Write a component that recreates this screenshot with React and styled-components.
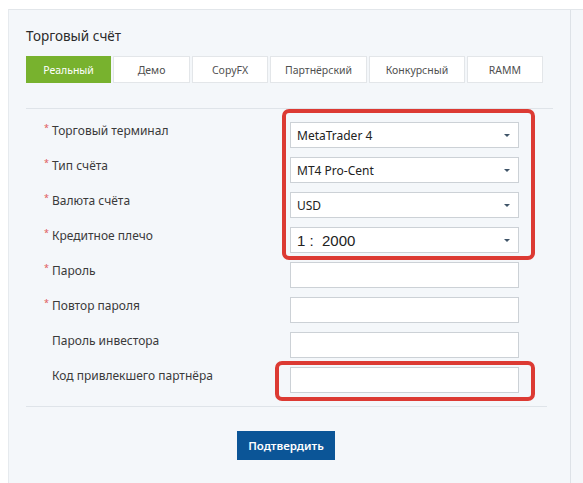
import React from 'react'
import styled, { createGlobalStyle } from 'styled-components'

const GlobalStyle = createGlobalStyle`
  body {
    margin: 0;
    background: #ffffff;
    font-family: "Noto Sans", "Open Sans", sans-serif;
  }
`

const tabs = [
  { label: 'Реальный', width: 85, active: true },
  { label: 'Демо', width: 77 },
  { label: 'CopyFX', width: 76 },
  { label: 'Партнёрский', width: 97 },
  { label: 'Конкурсный', width: 96 },
  { label: 'RAMM', width: 76 },
]

const fields = [
  { label: 'Торговый терминал', required: true, select: 'MetaTrader 4' },
  { label: 'Тип счёта', required: true, select: 'MT4 Pro-Cent' },
  { label: 'Валюта счёта', required: true, select: 'USD' },
  { label: 'Кредитное плечо', required: true, select: '1 :  2000', big: true },
  { label: 'Пароль', required: true },
  { label: 'Повтор пароля', required: true },
  { label: 'Пароль инвестора' },
  { label: 'Код привлекшего партнёра' },
]

const App = () => {
  return (
    <Page>
      <GlobalStyle />
      <Frame>
        <Main>
          <Titulo>Торговый счёт</Titulo>
          <Tabs>
            {tabs.map(t => (
              <Tab key={t.label} $w={t.width} $active={t.active}>{t.label}</Tab>
            ))}
          </Tabs>
          <Divider />
          <Form>
            {fields.map(f => (
              <Row key={f.label}>
                <Label>
                  <Star>{f.required ? '*' : ''}</Star>
                  {f.label}
                </Label>
                {f.select ? (
                  <Select>
                    <SelectValue $big={f.big}>{f.select}</SelectValue>
                    <Arrow />
                  </Select>
                ) : (
                  <Input />
                )}
              </Row>
            ))}
            <Highlight $x={256} $y={-13} $w={253} $h={151} />
            <Highlight $x={249} $y={239} $w={260} $h={40} />
          </Form>
          <Divider $w={521} />
          <Actions>
            <Boton>Подтвердить</Boton>
          </Actions>
        </Main>
      </Frame>
    </Page>
  )
}

const Page = styled.div`
  padding: 9px 0 0 8px;
`

const Frame = styled.div`
  display: flex;
  min-height: 474px;
  background: #f4f7fa;
  border-top: 1px solid #e2e6ea;
  border-left: 1px solid #e6eaee;
`

const Main = styled.div`
  width: 544px;
  padding: 16px 0 0 17px;
  border-right: 1px solid #dde2e7;
`

const Titulo = styled.h2`
  margin: 0;
  font-size: 13.5px;
  line-height: 20px;
  font-weight: 400;
  color: #2b2b2b;
`

const Tabs = styled.div`
  display: flex;
  gap: 2px;
  margin-top: 10px;
`

const Tab = styled.div`
  width: ${p => p.$w}px;
  height: 27px;
  box-sizing: border-box;
  display: flex;
  align-items: center;
  justify-content: center;
  font-size: 10.5px;
  color: ${p => (p.$active ? '#ffffff' : '#505050')};
  background: ${p => (p.$active ? '#78b22e' : '#ffffff')};
  border: 1px solid ${p => (p.$active ? '#78b22e' : '#e3e6e9')};
`

const Divider = styled.div`
  width: ${p => p.$w || 527}px;
  height: 1px;
  background: #dfe4e9;
  margin-top: ${p => (p.$w ? 13 : 25)}px;
`

const Form = styled.div`
  position: relative;
  display: flex;
  flex-direction: column;
  gap: 9px;
  margin-top: 13px;
`

const Row = styled.div`
  display: flex;
  align-items: flex-start;
`

const Label = styled.div`
  width: 246px;
  padding-left: 18px;
  display: flex;
  font-size: 12px;
  line-height: 18px;
  color: #3a3a3a;
`

const Star = styled.span`
  width: 8px;
  color: #e0575b;
  font-size: 9px;
  line-height: 11px;
`

const Select = styled.div`
  width: 229px;
  height: 26px;
  box-sizing: border-box;
  display: flex;
  align-items: center;
  justify-content: space-between;
  padding: 0 8px 0 6px;
  background: #ffffff;
  border: 1px solid #ccd1d6;
`

const SelectValue = styled.span`
  font-family: ${p => (p.$big ? '"Liberation Sans", Arial, sans-serif' : 'inherit')};
  font-size: ${p => (p.$big ? 15 : 12)}px;
  color: #222222;
  white-space: pre;
`

const Arrow = styled.span`
  width: 0;
  height: 0;
  border-left: 3px solid transparent;
  border-right: 3px solid transparent;
  border-top: 3px solid #3f5468;
`

const Input = styled.div`
  width: 229px;
  height: 26px;
  box-sizing: border-box;
  background: #ffffff;
  border: 1px solid #ccd1d6;
`

const Highlight = styled.div`
  position: absolute;
  left: ${p => p.$x}px;
  top: ${p => p.$y}px;
  width: ${p => p.$w}px;
  height: ${p => p.$h}px;
  box-sizing: border-box;
  border: 4px solid #dc3a33;
  border-radius: 7px;
  pointer-events: none;
`

const Actions = styled.div`
  display: flex;
  padding-left: 211px;
  margin-top: 24px;
`

const Boton = styled.button`
  width: 98px;
  height: 29px;
  border: none;
  background: #0b5597;
  color: #ffffff;
  font-family: "Noto Sans", sans-serif;
  font-size: 11.5px;
  font-weight: 600;
  cursor: pointer;
`

export default App
